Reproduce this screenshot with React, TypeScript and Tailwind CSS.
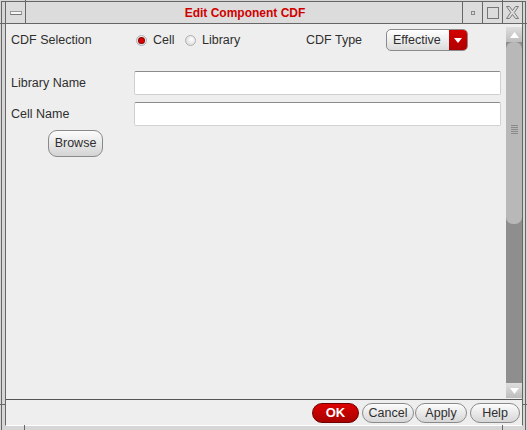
import React from "react";

function Radio({ on }: { on?: boolean }) {
  return (
    <span className="flex h-[11px] w-[11px] items-center justify-center rounded-full border border-[#b0b0b0] bg-[radial-gradient(circle_at_60%_40%,#ffffff,#d2d2d2)]">
      {on && <span className="h-[5px] w-[5px] rounded-full bg-[#d80000] shadow-[0_0_0_1px_#8a0000]" />}
    </span>
  );
}

function Pill({ label, w, primary }: { label: string; w: string; primary?: boolean }) {
  if (primary) {
    return (
      <button className={`${w} flex h-[20px] items-center justify-center rounded-full border border-[#700000] bg-[linear-gradient(#dc0000,#a80000)] text-[13px] font-bold text-white`}>
        {label}
      </button>
    );
  }
  return (
    <button className={`${w} flex h-[20px] items-center justify-center rounded-full border border-[#8a8a8a] bg-[linear-gradient(#fcfcfc,#d6d6d6)] text-[12.5px] text-[#2e2e2e]`}>
      {label}
    </button>
  );
}

function TextBox() {
  return (
    <div className="h-[24px] w-[367px] rounded-[2px] border border-[#d0d0d0] border-t-[#8c8c8c] bg-white" />
  );
}

export default function App() {
  return (
    <div className="relative h-[430px] w-[527px] overflow-hidden bg-[#d6d6d6] font-['Liberation_Sans',Arial,sans-serif] text-[#2e2e2e]">
      {/* frame ticks */}
      <div className="absolute left-[25px] top-0 h-[2px] w-px bg-[#666]" />
      <div className="absolute left-[502px] top-0 h-[2px] w-px bg-[#666]" />
      <div className="absolute left-[24px] top-[425px] h-[5px] w-px bg-[#666]" />
      <div className="absolute left-[502px] top-[425px] h-[5px] w-px bg-[#666]" />
      <div className="absolute left-0 top-[404px] h-px w-[5px] bg-[#666]" />
      <div className="absolute left-[522px] top-[404px] h-px w-[5px] bg-[#666]" />
      <div className="absolute left-0 top-[23px] h-px w-[5px] bg-[#666]" />
      <div className="absolute left-[522px] top-[23px] h-px w-[5px] bg-[#666]" />

      <div className="ml-px mt-px h-[434px] w-[525px] border border-[#666] bg-[#d6d6d6] pb-[4px] pl-[3px] pr-[2px]">
        <div className="flex h-[424px] flex-col border-x border-b border-[#666] border-b-white">
          {/* title bar */}
          <div className="flex h-[22px] border-b border-[#666] bg-[#dcdcdc]">
            <div className="flex w-[20px] items-center justify-center border-r border-[#666]">
              <div className="h-[4px] w-[12px] border border-[#999] border-b-[#777] bg-[#f6f6f6]" />
            </div>
            <div className="flex flex-1 items-center justify-center pl-[2px] text-[12px] font-bold text-[#d00000]">
              Edit Component CDF
            </div>
            <div className="flex w-[20px] items-center justify-center border-l border-[#666]">
              <div className="h-[4px] w-[4px] border border-[#888]" />
            </div>
            <div className="flex w-[20px] items-center justify-center border-l border-[#666]">
              <div className="h-[12px] w-[12px] border border-[#777]" />
            </div>
            <div className="flex w-[20px] items-center justify-center border-l border-[#666]">
              <svg width="13" height="13" viewBox="0 0 13 13">
                <polygon
                  points="0.5,0.5 3.5,0.5 6.5,4.5 9.5,0.5 12.5,0.5 8.3,6.5 12.5,12.5 9.5,12.5 6.5,8.5 3.5,12.5 0.5,12.5 4.7,6.5"
                  fill="none"
                  stroke="#7a7a7a"
                  strokeWidth="1"
                />
              </svg>
            </div>
          </div>

          {/* body */}
          <div className="flex h-[375px] bg-[#eeeeee]">
            <div className="flex-1 pl-[5px] text-[12.5px]">
              <div className="mt-[5px] flex h-[22px] items-center">
                <span className="w-[125px]">CDF Selection</span>
                <div className="flex w-[170px] items-center">
                  <Radio on />
                  <span className="ml-[6px] w-[32px]">Cell</span>
                  <Radio />
                  <span className="ml-[6px]">Library</span>
                </div>
                <span className="w-[80px]">CDF Type</span>
                <div className="flex h-[22px] w-[82px] overflow-hidden rounded-[5px] border border-[#8a8a8a] bg-[linear-gradient(#ffffff,#dcdcdc)]">
                  <span className="flex flex-1 items-center pl-[6px]">Effective</span>
                  <span className="flex w-[18px] items-center justify-center bg-[linear-gradient(#d40000,#b00000)]">
                    <svg width="8" height="5" viewBox="0 0 8 5">
                      <polygon points="0,0 8,0 4,5" fill="#ffffff" />
                    </svg>
                  </span>
                </div>
              </div>

              <div className="mt-[20px] flex items-center">
                <span className="w-[123px]">Library Name</span>
                <TextBox />
              </div>
              <div className="mt-[7px] flex items-center">
                <span className="w-[123px]">Cell Name</span>
                <TextBox />
              </div>
              <button className="ml-[37px] mt-[4px] flex h-[27px] w-[55px] items-center justify-center rounded-[9px] border border-[#8a8a8a] bg-[linear-gradient(#fcfcfc,#d4d4d4)] text-[12.5px] text-[#2e2e2e]">
                Browse
              </button>
            </div>

            {/* scrollbar */}
            <div className="flex w-[16px] flex-col pb-[1px] pt-[3px]">
              <div className="flex h-[15px] items-center justify-center bg-[linear-gradient(#dedede,#bdbdbd)]">
                <svg width="9" height="6" viewBox="0 0 9 6">
                  <polygon points="4.5,0 9,6 0,6" fill="#ffffff" />
                </svg>
              </div>
              <div className="flex flex-1 flex-col bg-[#8e8e8e]">
                <div className="flex h-[182px] items-center justify-center rounded-[7px] bg-[#b8b8b8]">
                  <div className="mt-[-8px] flex flex-col gap-[1px]">
                    <div className="h-px w-[7px] bg-[#8a8a8a]" />
                    <div className="h-px w-[7px] bg-[#8a8a8a]" />
                    <div className="h-px w-[7px] bg-[#8a8a8a]" />
                    <div className="h-px w-[7px] bg-[#8a8a8a]" />
                    <div className="h-px w-[7px] bg-[#8a8a8a]" />
                  </div>
                </div>
              </div>
              <div className="flex h-[15px] items-center justify-center bg-[linear-gradient(#dedede,#bdbdbd)]">
                <svg width="9" height="6" viewBox="0 0 9 6">
                  <polygon points="0,0 9,0 4.5,6" fill="#ffffff" />
                </svg>
              </div>
            </div>
          </div>

          <div className="h-px bg-[#555]" />

          {/* buttons */}
          <div className="flex h-[25px] items-start justify-end bg-[#eeeeee] pr-[2px] pt-[3px]">
            <div className="mr-[3px]">
              <Pill label="OK" w="w-[47px]" primary />
            </div>
            <div className="mr-[1px]">
              <Pill label="Cancel" w="w-[52px]" />
            </div>
            <div className="mr-[3px]">
              <Pill label="Apply" w="w-[52px]" />
            </div>
            <Pill label="Help" w="w-[50px]" />
          </div>
        </div>
      </div>
    </div>
  );
}
